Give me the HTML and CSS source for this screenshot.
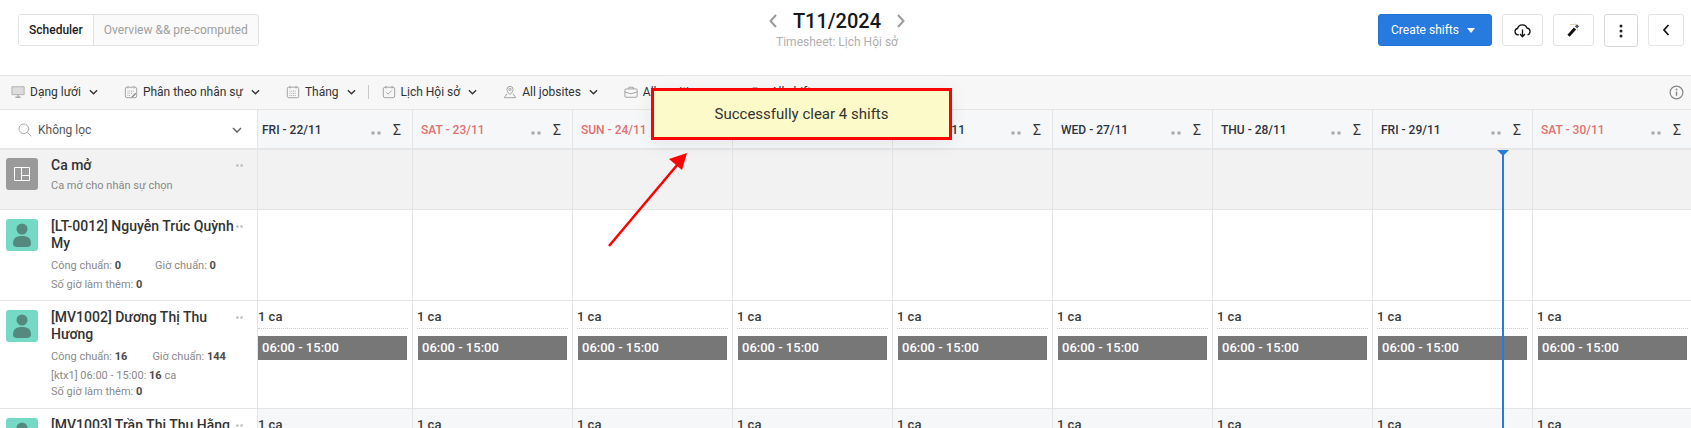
FILE: index.html
```html
<!DOCTYPE html>
<html lang="vi">
<head>
<meta charset="utf-8">
<title>Scheduler</title>
<link rel="stylesheet" href="styles.css">
</head>
<body>
<svg class="defs" width="0" height="0" aria-hidden="true">
  <symbol id="chev" viewBox="0 0 10 6"><path d="M1 1l4 4 4-4" fill="none" stroke="currentColor" stroke-width="1.5"/></symbol>
  <symbol id="dots" viewBox="0 0 10 4"><circle cx="2" cy="2" r="1.8"/><circle cx="8" cy="2" r="1.8"/></symbol>
  <symbol id="person" viewBox="0 0 32 32"><circle cx="16" cy="10" r="5.5"/><path d="M7 25c0-6 3-8 9-8s9 2 9 8c0 2-2 3-4 3H11c-2 0-4-1-4-3z"/></symbol>
</svg>
<header class="topbar">
  <div class="tabs">
    <span class="tab tab-active">Scheduler</span>
    <span class="tab">Overview &amp;&amp; pre-computed</span>
  </div>
  <div class="period">
    <div class="period-line">
      <svg class="period-arrow" viewBox="0 0 10 16"><path d="M8 2L2.500 8 8 14" fill="none" stroke="currentColor" stroke-width="2"/></svg>
      <span class="period-title">T11/2024</span>
      <svg class="period-arrow" viewBox="0 0 10 16"><path d="M2 2l5.500 6L2 14" fill="none" stroke="currentColor" stroke-width="2"/></svg>
    </div>
    <div class="period-sub">Timesheet: Lịch Hội sở</div>
  </div>
  <div class="actions">
    <button class="btn-primary">Create shifts<span class="caret"></span></button>
    <button class="btn btn-wide"><svg width="17" height="15" viewBox="0 0 17 15"><path d="M4.800 11.800H4a3.200 3.200 0 0 1-.5-6.300A5 5 0 0 1 13 5a3.500 3.500 0 0 1 .6 6.800" fill="none" stroke="#111" stroke-width="1.300"/><path d="M8.500 6.500v7M6 11l2.500 2.700L11 11" fill="none" stroke="#111" stroke-width="1.300"/></svg></button>
    <button class="btn btn-wide"><svg width="13" height="14" viewBox="0 0 13 14"><path d="M1.500 12.800L8 5.500" stroke="#111" stroke-width="3"/><path d="M9 4.500l2-2.200" stroke="#555" stroke-width="3"/><path d="M3.500 1.500h3M10 7h2M8 .8v1.500" stroke="#c9a14a" stroke-width="1" stroke-dasharray="1 1"/></svg></button>
    <button class="btn btn-more"><svg width="4" height="14" viewBox="0 0 4 14"><circle cx="2" cy="2" r="1.500" fill="#222"/><circle cx="2" cy="7" r="1.500" fill="#222"/><circle cx="2" cy="12" r="1.500" fill="#222"/></svg></button>
    <button class="btn btn-back"><svg width="8" height="12" viewBox="0 0 8 12"><path d="M6.500 1L2 6l4.500 5" fill="none" stroke="#111" stroke-width="1.700"/></svg></button>
  </div>
</header>

<nav class="toolbar">
  <span class="filter"><svg class="ficon" viewBox="0 0 16 16"><path d="M1 2h14v9H1z" fill="#ddd" stroke="#aaa"/><path d="M5 14h6M8 11v3" stroke="#aaa" stroke-width="1.500"/></svg>Dạng lưới<svg class="fchev"><use href="#chev"/></svg></span>
  <span class="filter"><svg class="ficon" viewBox="0 0 16 16"><rect x="1.500" y="2.500" width="13" height="12" rx="2" fill="none" stroke="#999"/><path d="M4.500 1v3M11.500 1v3M4 7h8M4 9.500h5M4 12h3" stroke="#999" stroke-dasharray="1 1"/><path d="M9 14l4.500-4.500" stroke="#888" stroke-width="1.500"/></svg>Phân theo nhân sự<svg class="fchev"><use href="#chev"/></svg></span>
  <span class="filter"><svg class="ficon" viewBox="0 0 16 16"><rect x="1.500" y="2.500" width="13" height="12" rx="1.500" fill="none" stroke="#999"/><path d="M4.500 1v3M11.500 1v3" stroke="#999"/><path d="M4 7h8M4 9.500h8M4 12h8" stroke="#999" stroke-dasharray="1 1"/></svg>Tháng<svg class="fchev"><use href="#chev"/></svg></span>
  <span class="sep"></span>
  <span class="filter"><svg class="ficon" viewBox="0 0 16 16"><rect x="1.500" y="2.500" width="13" height="12" rx="2" fill="none" stroke="#999"/><path d="M4.500 1v3M11.500 1v3" stroke="#999"/><path d="M5 8.500l2 2 4-4" fill="none" stroke="#999"/></svg>Lịch Hội sở<svg class="fchev"><use href="#chev"/></svg></span>
  <span class="filter"><svg class="ficon" viewBox="0 0 16 16"><path d="M8 11S4.500 7.800 4.500 5a3.500 3.500 0 0 1 7 0C11.500 7.800 8 11 8 11z" fill="none" stroke="#999"/><circle cx="8" cy="5" r="1.300" fill="none" stroke="#999"/><path d="M4.500 10L1.500 14.500h13L11.500 10" fill="none" stroke="#999"/></svg>All jobsites<svg class="fchev"><use href="#chev"/></svg></span>
  <span class="filter"><svg class="ficon" viewBox="0 0 16 16"><rect x="1" y="4.500" width="14" height="9.500" rx="1" fill="none" stroke="#999"/><path d="M5.500 4.500V2.500h5v2M1 8l7 2 7-2" fill="none" stroke="#999"/></svg>All positions<svg class="fchev"><use href="#chev"/></svg></span>
  <span class="filter"><svg class="ficon" viewBox="0 0 16 16"><path d="M1 3h5l2 2h7v9H1z" fill="none" stroke="#999"/></svg>All shifts<svg class="fchev"><use href="#chev"/></svg></span>
  <svg class="info" viewBox="0 0 16 16"><circle cx="8" cy="8" r="6.800" fill="none" stroke="#888" stroke-width="1.300"/><path d="M8 7v4.500" stroke="#888" stroke-width="1.500"/><circle cx="8" cy="4.800" r="1" fill="#888"/></svg>
</nav>

<main class="grid">
  <div class="row row-head">
    <div class="side side-head">
      <svg class="search" viewBox="0 0 14 14"><circle cx="5.800" cy="5.800" r="4.800" fill="none" stroke="#aaa"/><path d="M9.300 9.300l4 4" stroke="#aaa"/></svg>
      <span class="search-text">Không lọc</span>
      <svg class="search-chev"><use href="#chev"/></svg>
    </div>
    <div class="day first"><span>FRI - 22/11</span><svg class="hdots"><use href="#dots"/></svg><span class="sum">Σ</span></div>
    <div class="day weekend"><span>SAT - 23/11</span><svg class="hdots"><use href="#dots"/></svg><span class="sum">Σ</span></div>
    <div class="day weekend"><span>SUN - 24/11</span><svg class="hdots"><use href="#dots"/></svg><span class="sum">Σ</span></div>
    <div class="day"><span>MON - 25/11</span><svg class="hdots"><use href="#dots"/></svg><span class="sum">Σ</span></div>
    <div class="day"><span>TUE - 26/11</span><svg class="hdots"><use href="#dots"/></svg><span class="sum">Σ</span></div>
    <div class="day"><span>WED - 27/11</span><svg class="hdots"><use href="#dots"/></svg><span class="sum">Σ</span></div>
    <div class="day"><span>THU - 28/11</span><svg class="hdots"><use href="#dots"/></svg><span class="sum">Σ</span></div>
    <div class="day"><span>FRI - 29/11</span><svg class="hdots"><use href="#dots"/></svg><span class="sum">Σ</span></div>
    <div class="day weekend"><span>SAT - 30/11</span><svg class="hdots"><use href="#dots"/></svg><span class="sum">Σ</span></div>
  </div>

  <div class="row row-open">
    <div class="side">
      <span class="avatar avatar-open"><svg width="16" height="14" viewBox="0 0 16 14"><path d="M.5.500h15v13H.5zM7.500.500v13M7.500 8.500h8" fill="none" stroke="#fff"/></svg></span>
      <div class="info-block">
        <div class="name">Ca mở</div>
        <div class="open-sub">Ca mở cho nhân sự chọn</div>
      </div>
      <svg class="sdots"><use href="#dots"/></svg>
    </div>
    <div class="cell first"></div><div class="cell"></div><div class="cell"></div><div class="cell"></div><div class="cell"></div><div class="cell"></div><div class="cell"></div><div class="cell"></div><div class="cell"></div>
  </div>

  <div class="row row-a">
    <div class="side">
      <span class="avatar"><svg class="person"><use href="#person"/></svg></span>
      <div class="info-block">
        <div class="name">[LT-0012] Nguyễn Trúc Quỳnh My</div>
        <div class="stats"><span>Công chuẩn: <b>0</b></span><span>Giờ chuẩn: <b>0</b></span></div>
        <div class="stats-line">Số giờ làm thêm: <b>0</b></div>
      </div>
      <svg class="sdots"><use href="#dots"/></svg>
    </div>
    <div class="cell first"></div><div class="cell"></div><div class="cell"></div><div class="cell"></div><div class="cell"></div><div class="cell"></div><div class="cell"></div><div class="cell"></div><div class="cell"></div>
  </div>

  <div class="row row-b">
    <div class="side">
      <span class="avatar"><svg class="person"><use href="#person"/></svg></span>
      <div class="info-block">
        <div class="name">[MV1002] Dương Thị Thu Hương</div>
        <div class="stats stats-narrow"><span>Công chuẩn: <b>16</b></span><span>Giờ chuẩn: <b>144</b></span></div>
        <div class="stats-tight">[ktx1] 06:00 - 15:00: <b>16</b> ca</div>
        <div class="stats-last">Số giờ làm thêm: <b>0</b></div>
      </div>
      <svg class="sdots"><use href="#dots"/></svg>
    </div>
    <div class="cell first"><div class="count">1 ca</div><div class="shift">06:00 - 15:00</div></div>
    <div class="cell"><div class="count">1 ca</div><div class="shift">06:00 - 15:00</div></div>
    <div class="cell"><div class="count">1 ca</div><div class="shift">06:00 - 15:00</div></div>
    <div class="cell"><div class="count">1 ca</div><div class="shift">06:00 - 15:00</div></div>
    <div class="cell"><div class="count">1 ca</div><div class="shift">06:00 - 15:00</div></div>
    <div class="cell"><div class="count">1 ca</div><div class="shift">06:00 - 15:00</div></div>
    <div class="cell"><div class="count">1 ca</div><div class="shift">06:00 - 15:00</div></div>
    <div class="cell"><div class="count">1 ca</div><div class="shift">06:00 - 15:00</div></div>
    <div class="cell"><div class="count">1 ca</div><div class="shift">06:00 - 15:00</div></div>
  </div>

  <div class="row row-c">
    <div class="side">
      <span class="avatar"><svg class="person"><use href="#person"/></svg></span>
      <div class="info-block">
        <div class="name">[MV1003] Trần Thị Thu Hằng</div>
      </div>
      <svg class="sdots"><use href="#dots"/></svg>
    </div>
    <div class="cell first"><div class="count">1 ca</div></div>
    <div class="cell"><div class="count">1 ca</div></div>
    <div class="cell"><div class="count">1 ca</div></div>
    <div class="cell"><div class="count">1 ca</div></div>
    <div class="cell"><div class="count">1 ca</div></div>
    <div class="cell"><div class="count">1 ca</div></div>
    <div class="cell"><div class="count">1 ca</div></div>
    <div class="cell"><div class="count">1 ca</div></div>
    <div class="cell"><div class="count">1 ca</div></div>
  </div>

  <div class="now-line"></div>
</main>

<div class="toast">Successfully clear 4 shifts</div>
<svg class="arrow" width="90" height="105" viewBox="0 0 90 105">
  <path d="M3 103L72 21" stroke="#f00" stroke-width="2.500" fill="none"/>
  <path d="M81 10L76 27 63 16z" fill="#f00"/>
</svg>
</body>
</html>
```
FILE: styles.css
```css
* { box-sizing: border-box; }
html, body { margin: 0; height: 428px; overflow: hidden; background: #fff; }
body { font-family: Roboto, "Liberation Sans", sans-serif; font-size: 13px; color: #2b2f38; position: relative; width: 1691px; }
.defs { position: absolute; }

/* top bar */
.topbar { height: 75px; display: grid; grid-template-columns: 1fr auto 1fr; padding: 14px 7px 0 18px; }
.tabs { display: flex; align-self: start; height: 32px; justify-self: start; border: 1px solid #e3e3e3; border-radius: 3px; background: #fafafa; font-size: 12px; color: #a0a0a0; overflow: hidden; }
.tab { display: flex; align-items: center; padding: 0 10px 0 10px; }
.tab-active { background: #fff; color: #1d1d1d; font-weight: 500; border-right: 1px solid #e3e3e3; }
.period { text-align: center; margin: -6px 28px 0 0; }
.period-line { display: flex; align-items: center; justify-content: center; gap: 15px; height: 28px; margin-top: -1px; }
.period-title { font-size: 20px; font-weight: 500; color: #16181d; }
.period-arrow { width: 10px; height: 16px; color: #9a9a9a; }
.period-sub { font-size: 12px; color: #b0b0b0; line-height: 15px; }
.actions { display: flex; justify-self: end; align-items: flex-start; gap: 10px; }
.btn-primary { height: 32px; width: 114px; border: 1px solid #1f74d8; border-radius: 3px; background: #277ade; color: #fff; font: 400 12px Roboto, sans-serif; display: flex; align-items: center; justify-content: center; gap: 8px; padding: 0 4px 0 0; }
.caret { border: 4px solid transparent; border-top: 5px solid #fff; border-bottom: 0; }
.btn { height: 32px; border: 1px solid #e4e4e4; border-radius: 3px; background: #fff; display: flex; align-items: center; justify-content: center; padding: 0; }
.btn-wide { width: 41px; }
.btn-more { width: 34px; height: 33px; border-color: #d8d8d8; }
.btn-back { width: 36px; }

/* toolbar */
.toolbar { height: 35px; border-top: 1px solid #e5e5e5; border-bottom: 1px solid #e5e5e5; background: #f7f7f7; display: flex; align-items: center; gap: 26px; padding: 0 7px 2px 11px; color: #333; font-size: 12px; position: relative; }
.filter { display: flex; align-items: center; gap: 5px; white-space: nowrap; }
.ficon { width: 14px; height: 16px; flex: none; }
.fchev { width: 9px; height: 6px; margin-left: 3px; color: #333; }
.sep { width: 1px; height: 14px; background: #c8c8c8; margin: 0 -13px 0 -14px; }
.info { width: 15px; height: 15px; margin-left: auto; margin-top: 2px; }

/* grid */
.grid { position: relative; }
.row { display: grid; grid-template-columns: 258px 155px repeat(8, 160px); width: 1693px; border-bottom: 1px solid #e4e4e4; }
.row-head { height: 40px; border-bottom: 2px solid #e6e6e6; }
.row-open { height: 60px; background: #f2f2f2; }
.row-a { height: 91px; }
.row-b { height: 108px; }
.row-c { height: 60px; }
.side { display: grid; grid-template-columns: 32px 1fr 8px; column-gap: 13px; padding-left: 6px; padding-right: 12px; border-right: 1px solid #e4e4e4; align-items: start; }
.avatar { width: 32px; height: 32px; margin-top: 9px; border-radius: 3px; background: #74d9c5; display: flex; align-items: center; justify-content: center; }
.avatar-open { background: #9a9a9a; margin-top: 8px; }
.person { width: 32px; height: 32px; fill: #55897f; }
.info-block { padding-top: 8px; margin-right: -18px; }
.row-open .info-block { padding-top: 7px; }
.name { font-size: 14px; line-height: 17px; font-weight: 500; color: #333; }
.open-sub { font-size: 11px; line-height: 17px; color: #888; margin-top: 3px; }
.stats { font-size: 11px; line-height: 19px; color: #8a8a8a; display: flex; gap: 34px; white-space: nowrap; margin-top: 4px; }
.stats-narrow { gap: 25px; }
.stats-line { font-size: 11px; line-height: 19px; color: #8a8a8a; white-space: nowrap; }
.stats-tight { font-size: 11px; line-height: 16px; color: #8a8a8a; margin-top: 2px; white-space: nowrap; }
.stats-last { font-size: 11px; line-height: 16px; color: #8a8a8a; white-space: nowrap; }
.info-block b { color: #4a4a4a; font-weight: 700; }
.sdots { width: 7px; height: 3px; fill: #bbb; margin-top: 15px; margin-left: -1px; }
.row-open .sdots { margin-top: 14px; }
.side-head { display: flex; align-items: center; background: #fff; padding: 2px 15px 0 18px; column-gap: 0; }
.search { width: 14px; height: 14px; }
.search-text { color: #555; margin-left: 6px; font-size: 12px; }
.search-chev { width: 10px; height: 6px; margin-left: auto; color: #666; }
.day { display: flex; align-items: center; background: #f6f7f9; border-right: 1px solid #e4e4e4; padding: 2px 10px 0 8px; font-weight: 500; font-size: 12px; color: #2e3442; }
.day.first { padding-left: 4px; }
.weekend { color: #df7272; }
.hdots { width: 10px; height: 4px; fill: #aaa; margin-left: auto; margin-top: 5px; }
.sum { font-size: 14px; font-weight: 400; color: #333; margin-left: 12px; width: 9px; }
.cell { border-right: 1px solid #e4e4e4; padding: 0 5px; }
.cell.first { padding-left: 0; }
.row-c .cell { background: #f6f7f9; }
.count { font-size: 13px; font-weight: 500; line-height: 16px; color: #3b3b3b; padding: 8px 0 3px; border-bottom: 1px dotted #ccc; margin: 0 -1px; }
.cell.first .count { margin-left: 0; }
.shift { margin-top: 7px; height: 24px; background: #777; color: #fff; font-weight: 500; line-height: 24px; padding-left: 4px; }
.now-line { position: absolute; left: 1502px; top: 40px; bottom: 0; width: 2px; background: #277ade; }
.now-line::before { content: ""; position: absolute; left: -5px; top: 0; border: 6px solid transparent; border-top: 6px solid #277ade; border-bottom: 0; }

/* annotation overlays */
.toast { position: absolute; left: 651px; top: 88px; width: 301px; height: 52px; border: 3px solid #f00; background: #fcfac8; display: flex; align-items: center; justify-content: center; font-size: 15px; color: #333; box-shadow: 0 4px 16px rgba(0,0,0,.07); }
.arrow { position: absolute; left: 606px; top: 143px; }
```
